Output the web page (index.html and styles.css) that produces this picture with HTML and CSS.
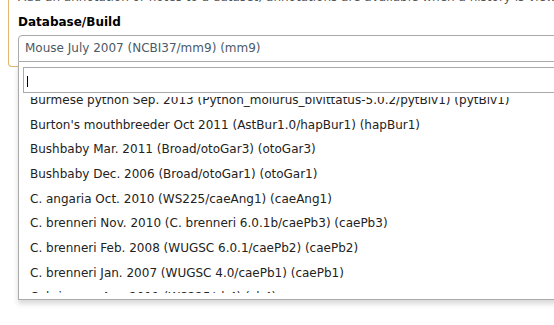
FILE: index.html
```html
<!DOCTYPE html>
<html lang="en">
<head>
    <meta charset="UTF-8">
    <title>Edit dataset attributes</title>
    <link rel="stylesheet" href="styles.css">
</head>
<body>

<div class="page">
    <div class="form-row">
        <div class="help">Add an annotation or notes to a dataset; annotations are available when a history is viewed.</div>
        <label class="label">Database/Build</label>
        <div class="select">
            <div class="select-choice">Mouse July 2007 (NCBI37/mm9) (mm9)</div>
            <div class="drop">
                <div class="search">
                    <div class="search-input"><span class="caret"></span></div>
                </div>
                <div class="results">
                    <ul>
                        <li>Burmese python Sep. 2013 (Python_molurus_bivittatus-5.0.2/pytBiv1) (pytBiv1)</li>
                        <li>Burton's mouthbreeder Oct 2011 (AstBur1.0/hapBur1) (hapBur1)</li>
                        <li>Bushbaby Mar. 2011 (Broad/otoGar3) (otoGar3)</li>
                        <li>Bushbaby Dec. 2006 (Broad/otoGar1) (otoGar1)</li>
                        <li>C. angaria Oct. 2010 (WS225/caeAng1) (caeAng1)</li>
                        <li>C. brenneri Nov. 2010 (C. brenneri 6.0.1b/caePb3) (caePb3)</li>
                        <li>C. brenneri Feb. 2008 (WUGSC 6.0.1/caePb2) (caePb2)</li>
                        <li>C. brenneri Jan. 2007 (WUGSC 4.0/caePb1) (caePb1)</li>
                        <li>C. briggsae Apr. 2011 (WS225/cb4) (cb4)</li>
                    </ul>
                </div>
            </div>
        </div>
    </div>
</div>

</body>
</html>
```

FILE: styles.css
```css
/* General styling */
body {
    margin: 0;
    background-color: #fff;
    font-family: "DejaVu Sans", Verdana, sans-serif;
    font-size: 12px;
    color: #000;
}

.page {
    width: 554px;
    height: 325px;
    overflow: hidden;
    padding-top: 1px;
    box-sizing: border-box;
}

/* Form row with the orange frame */
.form-row {
    width: 640px;
    margin: -1px 0 0 8px;
    padding: 0 0 4px 9px;
    border: 1px solid #e2b66c;
    border-top: none;
    border-right: none;
    border-radius: 0 0 0 4px;
}

.help {
    margin-top: -11px;
    line-height: 14px;
    color: #555;
    white-space: nowrap;
}

.label {
    display: block;
    margin: 11px 0 6px;
    line-height: 14px;
    font-weight: bold;
}

/* Select box */
.select {
    position: relative;
}

.select-choice {
    box-sizing: border-box;
    height: 27px;
    padding-left: 6px;
    line-height: 25px;
    border: 1px solid #aaa;
    border-radius: 4px 4px 0 0;
    color: #4b5a68;
    background-color: #fff;
}

/* Open dropdown (lies over the content below) */
.drop {
    position: absolute;
    top: 100%;
    left: 0;
    right: 0;
    background-color: #fff;
    border: 1px solid #aaa;
    border-top: none;
    box-shadow: 0 4px 5px rgba(0, 0, 0, 0.15);
    z-index: 10;
}

.search {
    padding: 5px 4px 0 4px;
}

.search-input {
    position: relative;
    box-sizing: border-box;
    height: 26px;
    border: 1px solid #aaa;
}

.caret {
    position: absolute;
    left: 3px;
    top: 8px;
    width: 1px;
    height: 11px;
    background-color: #000;
}

.results {
    height: 196px;
    margin: 4px 4px 6px 0;
    padding-left: 4px;
    overflow: hidden;
}

.results ul {
    list-style: none;
    margin: -8px 0 0;
    padding: 0;
}

.results li {
    padding: 3px 7px 4px;
    line-height: 17.67px;
    color: #222;
    white-space: nowrap;
}
```
